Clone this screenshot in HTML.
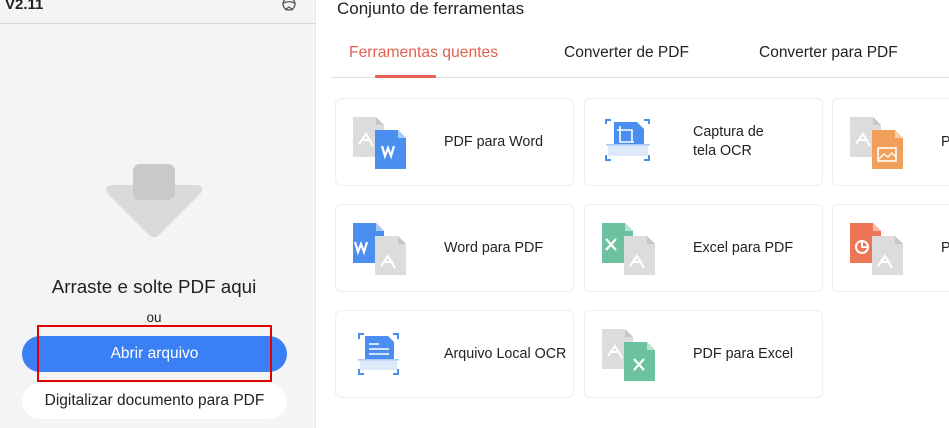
<!DOCTYPE html>
<html><head><meta charset="utf-8"><style>
*{margin:0;padding:0;box-sizing:border-box}
body{width:949px;height:428px;overflow:hidden;background:#fff;font-family:"Liberation Sans",Arial,sans-serif;position:relative;color:#222}
.a{position:absolute;white-space:nowrap}
#left{position:absolute;left:0;top:0;width:316px;height:428px;background:#f4f4f4;border-right:1px solid #e6e6e6}
.card{position:absolute;width:239px;height:88px;border:1px solid #eeeeee;border-radius:6px;background:#fff}
.card svg{position:absolute;left:15px;top:15px}
.card .t{position:absolute;left:108px;top:0;height:86px;display:flex;align-items:center;font-size:14.3px;color:#222;line-height:19px}
</style></head><body>
<div id="left">
 <div class="a" style="left:5px;top:-4px;font-size:15px;font-weight:bold;color:#222">V2.11</div>
 <svg class="a" style="left:278px;top:-3px" width="22" height="18" viewBox="0 0 22 18"><circle cx="11" cy="7" r="6" fill="none" stroke="#555" stroke-width="1.3"/><path d="M5 7c2-3 10-3 12 0M7 13l4-3 4 3" fill="none" stroke="#555" stroke-width="1.2"/></svg>
 <div class="a" style="left:0;top:23px;width:316px;height:1px;background:#d8d8d8"></div>
 <svg class="a" style="left:104px;top:163px" width="100" height="80" viewBox="0 0 100 80"><path d="M8 22h84c6 0 8 5 4 9L55 72c-3 3-7 3-10 0L4 31c-4-4-2-9 4-9z" fill="#dadada"/><rect x="29" y="1" width="42" height="36" rx="7" fill="#c9c9c9"/></svg>
 <div class="a" style="left:0;width:308px;text-align:center;top:276px;font-size:18.8px;color:#222">Arraste e solte PDF aqui</div>
 <div class="a" style="left:0;width:308px;text-align:center;top:310px;font-size:13.5px;color:#222">ou</div>
 <div class="a" style="left:22px;top:336px;width:265px;height:36px;border-radius:18px;background:#3b7ff5;color:#fff;font-size:15.5px;text-align:center;line-height:36px">Abrir arquivo</div>
 <div class="a" style="left:37px;top:325px;width:235px;height:57px;border:2px solid #e00000"></div>
 <div class="a" style="left:22px;top:383px;width:265px;height:36px;border-radius:18px;background:#fff;color:#222;font-size:15.5px;text-align:center;line-height:36px">Digitalizar documento para PDF</div>
</div>
<div class="a" style="left:337px;top:-1px;font-size:17px;color:#222">Conjunto de ferramentas</div>
<div class="a" style="left:349px;top:44px;font-size:15.7px;color:#e5604f">Ferramentas quentes</div>
<div class="a" style="left:564px;top:44px;font-size:15.5px;color:#222">Converter de PDF</div>
<div class="a" style="left:759px;top:44px;font-size:15.5px;color:#222">Converter para PDF</div>
<div class="a" style="left:331px;top:77px;width:618px;height:1px;background:#e0e0e0"></div>
<div class="a" style="left:375px;top:75px;width:61px;height:3px;background:#e5604f;border-radius:1px"></div>

<div class="card" style="left:335px;top:98px"><svg width="60" height="60" viewBox="0 0 60 60"><path d="M2 3h23l8 8v32H2z" fill="#dcdcdc"/><path d="M25 3v8h8z" fill="#c6c6c6"/><path d="M8 30l7-10 7 12M10 26h10" stroke="#fff" stroke-width="2" fill="none"/><path d="M24 16h23l8 8v31H24z" fill="#4a8ef0"/><path d="M47 16v8h8z" fill="#a9c9f8"/><path d="M31 32l3 10 3-8 3 8 3-10" stroke="#fff" stroke-width="2.2" fill="none"/></svg><div class="t">PDF para Word</div></div>
<div class="card" style="left:584px;top:98px"><svg width="60" height="60" viewBox="0 0 60 60"><path d="M6 10V6h5M44 6h5v4M6 41v5h5M44 46h5v-5" stroke="#4a8ef0" stroke-width="2" fill="none"/><path d="M14 8h23l7 7v15H14z" fill="#4a8ef0"/><rect x="8" y="30" width="40" height="12" fill="#dde8f8"/><path d="M20 12v16h14M17 16h15v12" stroke="#fff" stroke-width="1.6" fill="none"/><rect x="6" y="30" width="44" height="1.5" fill="#a9c9f8"/></svg><div class="t">Captura de<br>tela OCR</div></div>
<div class="card" style="left:832px;top:98px;width:130px"><svg width="60" height="60" viewBox="0 0 60 60"><path d="M2 3h23l8 8v32H2z" fill="#dcdcdc"/><path d="M25 3v8h8z" fill="#c6c6c6"/><path d="M8 30l7-10 7 12M10 26h10" stroke="#fff" stroke-width="2" fill="none"/><path d="M24 16h23l8 8v31H24z" fill="#f0a05a"/><path d="M47 16v8h8z" fill="#f8cfa8"/><rect x="30" y="34" width="18" height="13" fill="none" stroke="#fff" stroke-width="1.6"/><path d="M31 45l5-5 4 3 4-4 4 4" stroke="#fff" stroke-width="1.4" fill="none"/></svg><div class="t">P</div></div>
<div class="card" style="left:335px;top:204px"><svg width="60" height="60" viewBox="0 0 60 60"><path d="M2 3h23l8 8v32H2z" fill="#4a8ef0"/><path d="M25 3v8h8z" fill="#a9c9f8"/><path d="M4 22l3 10 3-8 3 8 3-10" stroke="#fff" stroke-width="2.2" fill="none"/><path d="M24 16h23l8 8v31H24z" fill="#dcdcdc"/><path d="M47 16v8h8z" fill="#c6c6c6"/><path d="M30 46l7-10 7 12M32 42h10" stroke="#fff" stroke-width="2" fill="none"/></svg><div class="t">Word para PDF</div></div>
<div class="card" style="left:584px;top:204px"><svg width="60" height="60" viewBox="0 0 60 60"><path d="M2 3h23l8 8v32H2z" fill="#6cc19e"/><path d="M25 3v8h8z" fill="#b8e2cf"/><path d="M6 19l10 11M16 19L6 30" stroke="#fff" stroke-width="2.2"/><path d="M24 16h23l8 8v31H24z" fill="#dcdcdc"/><path d="M47 16v8h8z" fill="#c6c6c6"/><path d="M30 46l7-10 7 12M32 42h10" stroke="#fff" stroke-width="2" fill="none"/></svg><div class="t">Excel para PDF</div></div>
<div class="card" style="left:832px;top:204px;width:130px"><svg width="60" height="60" viewBox="0 0 60 60"><path d="M2 3h23l8 8v32H2z" fill="#ee7656"/><path d="M25 3v8h8z" fill="#f8b9a6"/><circle cx="14" cy="27" r="6" fill="none" stroke="#fff" stroke-width="2"/><path d="M14 21v6h6" stroke="#fff" stroke-width="2" fill="none"/><path d="M24 16h23l8 8v31H24z" fill="#dcdcdc"/><path d="M47 16v8h8z" fill="#c6c6c6"/><path d="M30 46l7-10 7 12M32 42h10" stroke="#fff" stroke-width="2" fill="none"/></svg><div class="t">P</div></div>
<div class="card" style="left:335px;top:310px"><svg width="60" height="60" viewBox="0 0 60 60"><path d="M8 13V8h5M42 8h5v5M8 43v5h5M42 48h5v-5" stroke="#4a8ef0" stroke-width="2" fill="none"/><path d="M14 10h23l6 6v17H14z" fill="#4a8ef0"/><rect x="9" y="33" width="37" height="11" fill="#dde8f8"/><path d="M18 18h10M18 23h20M18 28h20" stroke="#fff" stroke-width="1.6"/><rect x="7" y="33" width="41" height="1.5" fill="#a9c9f8"/></svg><div class="t">Arquivo Local OCR</div></div>
<div class="card" style="left:584px;top:310px"><svg width="60" height="60" viewBox="0 0 60 60"><path d="M2 3h23l8 8v32H2z" fill="#dcdcdc"/><path d="M25 3v8h8z" fill="#c6c6c6"/><path d="M8 30l7-10 7 12M10 26h10" stroke="#fff" stroke-width="2" fill="none"/><path d="M24 16h23l8 8v31H24z" fill="#6cc19e"/><path d="M47 16v8h8z" fill="#b8e2cf"/><path d="M34 33l10 11M44 33L34 44" stroke="#fff" stroke-width="2.2"/></svg><div class="t">PDF para Excel</div></div>
</body></html>
